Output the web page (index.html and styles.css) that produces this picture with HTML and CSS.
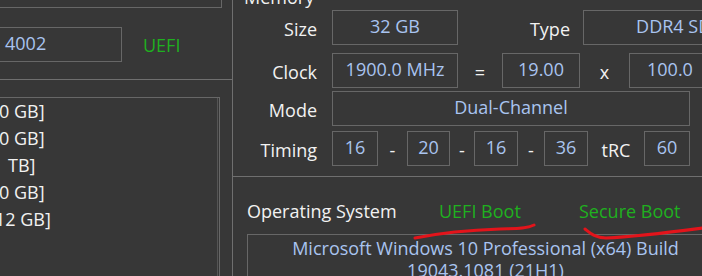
FILE: index.html
```html
<!DOCTYPE html>
<html lang="en">
<head>
<meta charset="utf-8">
<title>System Summary</title>
<link rel="stylesheet" href="styles.css">
</head>
<body>
<div class="screen">
  <div class="left">
    <div class="left-top">
      <div class="top-box"></div>
      <div class="bios-row">
        <div class="field field-start bios-field">4002</div>
        <span class="green uefi">UEFI</span>
      </div>
    </div>
    <div class="left-bottom">
      <div class="drive-list">
        <div class="drive-inner">
          <div class="drive">0 GB]</div>
          <div class="drive">0 GB]</div>
          <div class="drive drive-in">TB]</div>
          <div class="drive">0 GB]</div>
          <div class="drive drive-out">12 GB]</div>
        </div>
      </div>
    </div>
  </div>

  <div class="right">
    <section class="memory">
      <div class="group-title">Memory</div>
      <div class="mrow row-size">
        <div class="label">Size</div>
        <div class="field w126">32 GB</div>
        <div class="label label-type">Type</div>
        <div class="field w220">DDR4 SDRAM</div>
      </div>
      <div class="mrow row-clock">
        <div class="label">Clock</div>
        <div class="field w126">1900.0 MHz</div>
        <div class="op w44">=</div>
        <div class="field w78">19.00</div>
        <div class="op w49">x</div>
        <div class="field field-start bclk-field">100.0</div>
      </div>
      <div class="mrow row-mode">
        <div class="label">Mode</div>
        <div class="field w358">Dual-Channel</div>
      </div>
      <div class="mrow row-timing">
        <div class="label">Timing</div>
        <div class="field w46">16</div>
        <div class="op w29">-</div>
        <div class="field w43">20</div>
        <div class="op w24">-</div>
        <div class="field w44">16</div>
        <div class="op w26">-</div>
        <div class="field w44">36</div>
        <div class="op w56">tRC</div>
        <div class="field w46">60</div>
      </div>
    </section>

    <section class="os">
      <div class="os-head">
        <span class="os-label">Operating System</span>
        <span class="green">UEFI Boot</span>
        <span class="green">Secure Boot</span>
      </div>
      <div class="os-box">
        <div>Microsoft Windows 10 Professional (x64) Build</div>
        <div>19043.1081 (21H1)</div>
      </div>
    </section>
  </div>

  <svg class="marks" width="702" height="276" viewBox="0 0 702 276" aria-hidden="true">
    <path d="M415 238 C 440 233, 470 230, 500 229 C 515 228.5, 526 229, 534 225" />
    <path d="M585 229 C 590 233, 595 238, 606 238 C 630 237, 665 233, 703 228" />
  </svg>
</div>
</body>
</html>
```

FILE: styles.css
```css
* {
  box-sizing: border-box;
}

html, body {
  margin: 0;
  padding: 0;
}

body {
  background: #373737;
  color: #f2f2f2;
  font-family: "Open Sans", "Noto Sans", sans-serif;
  font-size: 18px;
  line-height: 24px;
  overflow: hidden;
}

.screen {
  position: relative;
  display: flex;
  width: 702px;
  height: 276px;
  overflow: hidden;
}

/* ---------- shared field ---------- */
.field {
  display: flex;
  align-items: center;
  justify-content: center;
  height: 35px;
  border: 1px solid #676767;
  color: #a9c4f0;
  padding-bottom: 3px;
  white-space: nowrap;
  overflow: hidden;
}

.field-start {
  justify-content: flex-start;
}

/* ---------- left column ---------- */
.left {
  flex: none;
  width: 233px;
  display: flex;
  flex-direction: column;
  border-right: 1px solid #6f6f6f;
}

.left-top {
  flex: none;
  height: 80px;
  border-bottom: 1px solid #6f6f6f;
}

.top-box {
  margin-top: -20px;
  margin-left: -10px;
  width: 232px;
  height: 28px;
  border: 1px solid #676767;
}

.bios-row {
  display: flex;
  align-items: center;
  margin-top: 19px;
}

.bios-field {
  flex: none;
  margin-left: -60px;
  width: 182px;
  padding-left: 64px;
}

.uefi {
  margin-left: 21px;
}

.left-bottom {
  flex: 1;
  padding-top: 17px;
}

.drive-list {
  margin-left: -10px;
  width: 230px;
  height: 300px;
  border: 1px solid #676767;
  padding-right: 1px;
}

.drive-inner {
  height: 100%;
  border-right: 1px solid #555555;
  padding-left: 8px;
  line-height: 27px;
  color: #f2f2f2;
}

.drive-in {
  padding-left: 9px;
}

.drive-out {
  margin-left: -4px;
}

/* ---------- right column ---------- */
.right {
  flex: 1;
  min-width: 0;
  display: flex;
  flex-direction: column;
}

.memory {
  flex: none;
  height: 177px;
  border-bottom: 1px solid #6f6f6f;
}

.group-title {
  margin-top: -15px;
  margin-left: 11px;
  height: 24px;
}

.mrow {
  display: flex;
  align-items: center;
  height: 35px;
}

.mrow > * {
  flex: none;
}

.row-size { margin-top: 1px; }
.row-clock { margin-top: 8px; }
.row-mode { margin-top: 3px; }
.row-timing { margin-top: 5px; }

.label {
  width: 84px;
  margin-right: 15px;
  text-align: right;
  padding-top: 2px;
}

.label-type {
  width: 112px;
  margin-right: 13px;
}

.op {
  text-align: center;
  padding-top: 2px;
}

.bclk-field {
  width: 120px;
  padding-left: 17px;
}

.w24 { width: 24px; }
.w26 { width: 26px; }
.w29 { width: 29px; }
.w43 { width: 43px; }
.w44 { width: 44px; }
.w46 { width: 46px; }
.w49 { width: 49px; }
.w56 { width: 56px; }
.w78 { width: 78px; }
.w126 { width: 126px; }
.w220 { width: 220px; }
.w358 { width: 358px; }

.green {
  color: #1fb01f;
}

/* ---------- operating system ---------- */
.os {
  flex: 1;
  padding-left: 14px;
  padding-top: 22px;
}

.os-head {
  display: grid;
  grid-template-columns: 192px 140px auto;
  height: 24px;
  white-space: nowrap;
}

.os-box {
  margin-top: 11px;
  width: 477px;
  height: 70px;
  border: 1px solid #676767;
  padding-top: 2px;
  text-align: center;
  line-height: 22px;
  color: #a9c4f0;
  white-space: nowrap;
}

/* hand-drawn annotation overlay */
.marks {
  position: absolute;
  left: 0;
  top: 0;
  pointer-events: none;
}

.marks path {
  fill: none;
  stroke: #e3141b;
  stroke-width: 3;
  stroke-linecap: round;
  stroke-linejoin: round;
}
```
